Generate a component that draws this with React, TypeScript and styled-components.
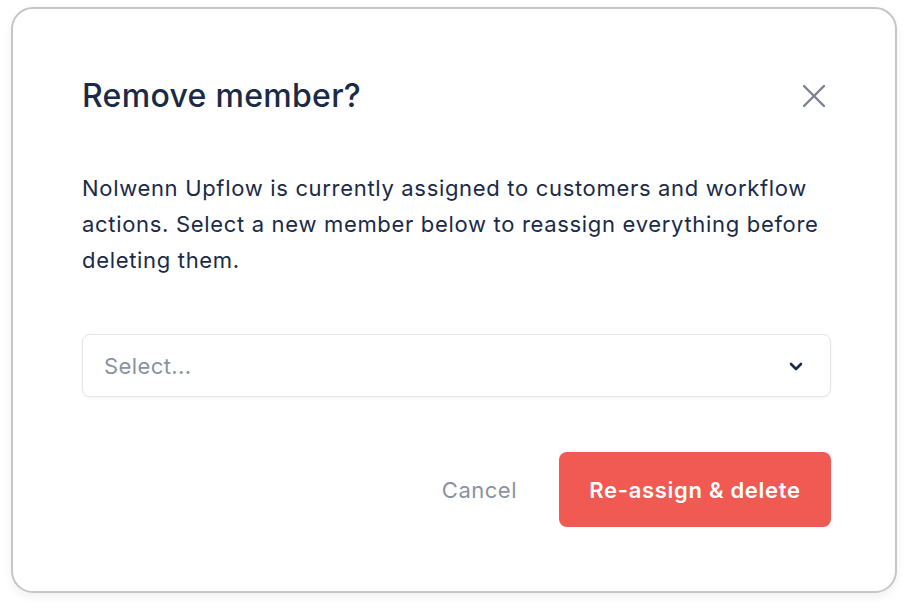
import React from "react";
import styled, { createGlobalStyle } from "styled-components";

const Global = createGlobalStyle`
  * { box-sizing: border-box; }
  html, body { margin: 0; padding: 0; background: #ffffff; }
  body { font-family: Inter, "Noto Sans", sans-serif; -webkit-font-smoothing: antialiased; }
`;

const Page = styled.div`
  padding: 7px 11px;
  width: 908px;
  height: 608px;
`;

const Dialog = styled.div`
  width: 886px;
  height: 586px;
  border: 2px solid #c6c6c6;
  border-radius: 22px;
  background: #fff;
  box-shadow: 0 4px 10px rgba(0, 0, 0, 0.06);
  padding: 69px 64px 0 69px;
  display: flex;
  flex-direction: column;
`;

const Header = styled.div`
  display: flex;
  align-items: center;
  justify-content: space-between;
  height: 36px;
`;

const Title = styled.h2`
  margin: 0;
  font-size: 32px;
  font-weight: 500;
  line-height: 36px;
  color: #1a2a47;
  letter-spacing: 0.3px;
`;

const CloseButton = styled.button`
  border: none;
  background: none;
  padding: 0;
  margin-right: 5px;
  width: 24px;
  height: 24px;
  display: flex;
  cursor: pointer;
  color: #7b8397;
`;

const Body = styled.p`
  margin: 56px 0 0 0;
  font-size: 22px;
  line-height: 36px;
  letter-spacing: 0.68px;
  color: #1a2a47;
`;

const SelectBox = styled.div`
  margin-top: 56px;
  height: 63px;
  border: 1px solid #e4e6ea;
  border-radius: 8px;
  box-shadow: 0 1px 3px rgba(20, 30, 50, 0.06);
  display: flex;
  align-items: center;
  justify-content: space-between;
  padding: 0 27px 0 21px;
`;

const Placeholder = styled.span`
  font-size: 22px;
  letter-spacing: 0.4px;
  color: #8a92a3;
`;

const Footer = styled.div`
  margin-top: 55px;
  display: flex;
  justify-content: flex-end;
  align-items: center;
  gap: 42px;
`;

const TextButton = styled.button`
  border: none;
  background: none;
  padding: 0;
  font-family: inherit;
  font-size: 22px;
  letter-spacing: 0.5px;
  color: #8a92a3;
  cursor: pointer;
`;

const PrimaryButton = styled.button`
  border: none;
  width: 272px;
  height: 75px;
  border-radius: 8px;
  background: #f05a52;
  color: #fff;
  font-family: inherit;
  font-size: 22px;
  font-weight: 600;
  letter-spacing: 0.7px;
  cursor: pointer;
`;

export default function App() {
  return (
    <Page>
      <Global />
      <Dialog>
        <Header>
          <Title>Remove member?</Title>
          <CloseButton aria-label="Close">
            <svg width="24" height="24" viewBox="0 0 24 24" fill="none" stroke="currentColor" strokeWidth="2.4" strokeLinecap="round">
              <line x1="2" y1="2" x2="22" y2="22" />
              <line x1="22" y1="2" x2="2" y2="22" />
            </svg>
          </CloseButton>
        </Header>
        <Body>
          Nolwenn Upflow is currently assigned to customers and workflow actions. Select a new member below to reassign everything before deleting them.
        </Body>
        <SelectBox>
          <Placeholder>Select...</Placeholder>
          <svg width="14" height="10" viewBox="0 0 14 10" fill="none" stroke="#1a2a47" strokeWidth="2.6" strokeLinecap="round" strokeLinejoin="round">
            <polyline points="2,3 7,8 12,3" />
          </svg>
        </SelectBox>
        <Footer>
          <TextButton>Cancel</TextButton>
          <PrimaryButton>Re-assign &amp; delete</PrimaryButton>
        </Footer>
      </Dialog>
    </Page>
  );
}
